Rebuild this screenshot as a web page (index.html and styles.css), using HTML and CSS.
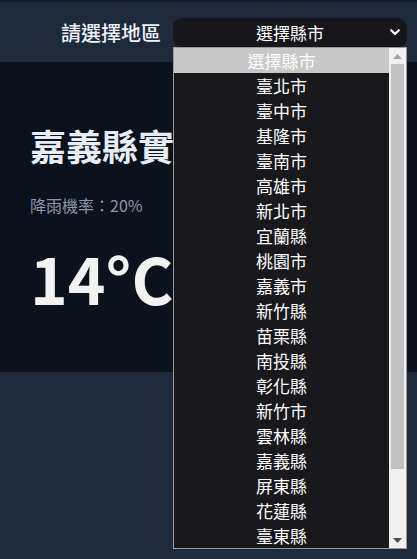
FILE: index.html
```html
<!DOCTYPE html>
<html lang="zh-Hant">
<head>
<meta charset="utf-8">
<title>天氣</title>
<link rel="stylesheet" href="styles.css">
</head>
<body>
<header class="topbar">
  <label class="region-label">請選擇地區</label>
  <div class="picker">
    <div class="picker-control">
      <span class="picker-value">選擇縣市</span>
      <svg class="chevron" width="10" height="7" viewBox="0 0 10 7"><path d="M1.2 1.2 L5 5 L8.8 1.2" fill="none" stroke="#ffffff" stroke-width="2.2" stroke-linecap="round" stroke-linejoin="round"/></svg>
    </div>
    <div class="picker-list">
      <ul class="options">
        <li class="option selected">選擇縣市</li>
        <li class="option">臺北市</li>
        <li class="option">臺中市</li>
        <li class="option">基隆市</li>
        <li class="option">臺南市</li>
        <li class="option">高雄市</li>
        <li class="option">新北市</li>
        <li class="option">宜蘭縣</li>
        <li class="option">桃園市</li>
        <li class="option">嘉義市</li>
        <li class="option">新竹縣</li>
        <li class="option">苗栗縣</li>
        <li class="option">南投縣</li>
        <li class="option">彰化縣</li>
        <li class="option">新竹市</li>
        <li class="option">雲林縣</li>
        <li class="option">嘉義縣</li>
        <li class="option">屏東縣</li>
        <li class="option">花蓮縣</li>
        <li class="option">臺東縣</li>
      </ul>
      <div class="scrollbar">
        <svg class="arrow" width="9" height="5" viewBox="0 0 9 5"><path d="M0 5 L4.5 0 L9 5 Z" fill="#a3a3a3"/></svg>
        <div class="thumb-track"><div class="thumb"></div></div>
        <svg class="arrow" width="9" height="5" viewBox="0 0 9 5"><path d="M0 0 L4.5 5 L9 0 Z" fill="#505050"/></svg>
      </div>
    </div>
  </div>
</header>
<main class="card">
  <h1 class="city">嘉義縣實時天氣</h1>
  <p class="rain">降雨機率：20%</p>
  <p class="temp">14°C</p>
</main>
</body>
</html>
```
FILE: styles.css
```css
* { box-sizing: border-box; }
html, body { margin: 0; padding: 0; }
body {
  background: #1e293b;
  font-family: "Noto Sans CJK TC", "Noto Sans", sans-serif;
  color: #f1f5f9;
  height: 559px;
  overflow: hidden;
}
.topbar {
  height: 62px;
  display: flex;
  justify-content: flex-end;
  align-items: center;
  gap: 12px;
  padding: 1px 10px 0 0;
  border-top: 2px solid #141c2a;
}
.region-label {
  font-size: 20px;
  font-weight: 500;
  color: #eef2f7;
}
.picker {
  position: relative;
  width: 234px;
}
.picker-control {
  height: 29px;
  border-radius: 9px;
  background: #17161b;
  display: flex;
  align-items: center;
  justify-content: center;
  position: relative;
}
.picker-value {
  font-size: 17px;
  color: #ffffff;
}
.chevron {
  position: absolute;
  right: 7px;
  top: 11px;
}
.picker-list {
  position: absolute;
  top: 29px;
  left: 0;
  width: 234px;
  height: 502px;
  border: 1px solid #9a9a9a;
  background: #19181d;
  display: flex;
  z-index: 10;
}
.options {
  list-style: none;
  margin: 0;
  padding: 0;
  flex: 1;
}
.option {
  height: 25px;
  line-height: 25px;
  text-align: center;
  font-size: 17px;
  color: #ffffff;
}
.option.selected {
  background: #c8c8c8;
}
.scrollbar {
  width: 17px;
  background: #f0f0f0;
  display: flex;
  flex-direction: column;
  align-items: center;
  padding: 6px 0 5px;
}
.arrow { flex: none; }
.thumb-track {
  flex: 1;
  width: 100%;
  padding: 5px 2px 0;
}
.thumb {
  height: 405px;
  background: #c1c1c1;
}
.card {
  background: #0b121c;
  height: 310px;
  padding: 60px 30px 0;
}
.city {
  margin: 0;
  font-size: 36px;
  line-height: 1.3;
  font-weight: 700;
  color: #e8edf3;
  white-space: nowrap;
}
.rain {
  margin: 24px 0 0;
  font-size: 16px;
  line-height: 1.5;
  color: #8c97a8;
}
.temp {
  margin: 22px 0 0;
  font-size: 64px;
  line-height: 1.2;
  font-weight: 700;
  color: #f2f2f2;
}
```
